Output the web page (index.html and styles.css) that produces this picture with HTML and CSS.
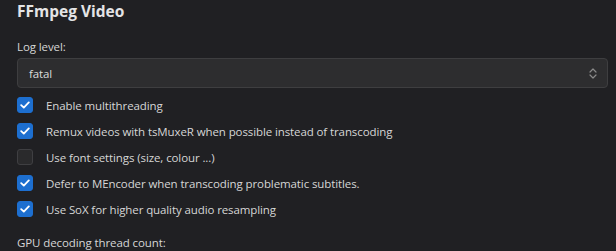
FILE: index.html
```html
<!DOCTYPE html>
<html lang="en">
<head>
<meta charset="utf-8">
<title>FFmpeg Video</title>
<link rel="stylesheet" href="styles.css">
</head>
<body>
<div class="panel">
  <h2 class="title">FFmpeg Video</h2>
  <div class="field">
    <div class="label">Log level:</div>
    <div class="select">
      <span class="select-value">fatal</span>
      <svg class="chevrons" width="8" height="11" viewBox="0 0 8 11" aria-hidden="true">
        <path d="M1 4 L4 1 L7 4 M1 7 L4 10 L7 7" fill="none" stroke="#8a8a8a" stroke-width="1.2" stroke-linecap="round" stroke-linejoin="round"/>
      </svg>
    </div>
  </div>
  <ul class="checks">
    <li class="check-row"><span class="box on"><svg width="10" height="8" viewBox="0 0 10 8"><path d="M1.2 4.2 L3.8 6.6 L8.8 1.4" fill="none" stroke="#fff" stroke-width="1.8" stroke-linecap="round" stroke-linejoin="round"/></svg></span><span class="check-text">Enable multithreading</span></li>
    <li class="check-row"><span class="box on"><svg width="10" height="8" viewBox="0 0 10 8"><path d="M1.2 4.2 L3.8 6.6 L8.8 1.4" fill="none" stroke="#fff" stroke-width="1.8" stroke-linecap="round" stroke-linejoin="round"/></svg></span><span class="check-text">Remux videos with tsMuxeR when possible instead of transcoding</span></li>
    <li class="check-row"><span class="box"></span><span class="check-text">Use font settings (size, colour ...)</span></li>
    <li class="check-row"><span class="box on"><svg width="10" height="8" viewBox="0 0 10 8"><path d="M1.2 4.2 L3.8 6.6 L8.8 1.4" fill="none" stroke="#fff" stroke-width="1.8" stroke-linecap="round" stroke-linejoin="round"/></svg></span><span class="check-text">Defer to MEncoder when transcoding problematic subtitles.</span></li>
    <li class="check-row"><span class="box on"><svg width="10" height="8" viewBox="0 0 10 8"><path d="M1.2 4.2 L3.8 6.6 L8.8 1.4" fill="none" stroke="#fff" stroke-width="1.8" stroke-linecap="round" stroke-linejoin="round"/></svg></span><span class="check-text">Use SoX for higher quality audio resampling</span></li>
  </ul>
  <div class="label gpu">GPU decoding thread count:</div>
</div>
</body>
</html>
```

FILE: styles.css
```css
html, body {
  margin: 0;
  padding: 0;
  background: #202023;
}
body {
  font-family: "Open Sans", "Noto Sans", sans-serif;
  font-size: 11.5px;
  letter-spacing: -0.1px;
  color: #d6d6d6;
  overflow: hidden;
}
.panel {
  padding: 0 8px 0 17px;
}
.title {
  margin: 0;
  font-size: 15.5px;
  font-weight: 700;
  letter-spacing: 0;
  line-height: 22px;
  color: #e4e4e6;
}
.field {
  margin-top: 16px;
}
.label {
  line-height: 18px;
  height: 18px;
}
.select {
  margin-top: 2px;
  height: 28px;
  border: 1px solid #3e3e40;
  border-radius: 4px;
  background: #2d2d2f;
  display: flex;
  align-items: center;
  justify-content: space-between;
  padding: 0 10px 0 11px;
}
.select-value {
  color: #dcdcdc;
}
.chevrons {
  display: block;
}
.checks {
  list-style: none;
  margin: 4px 0 0;
  padding: 0;
}
.check-row {
  height: 26px;
  display: flex;
  align-items: center;
  gap: 13px;
}
.box {
  width: 14px;
  height: 14px;
  border: 1px solid #3f3f42;
  border-radius: 3px;
  background: #2a2a2c;
  display: flex;
  align-items: center;
  justify-content: center;
  flex: none;
}
.box.on {
  background: #1d6fd0;
  border-color: #1d6fd0;
}
.box svg {
  display: block;
}
.gpu {
  margin-top: 12px;
}
```
